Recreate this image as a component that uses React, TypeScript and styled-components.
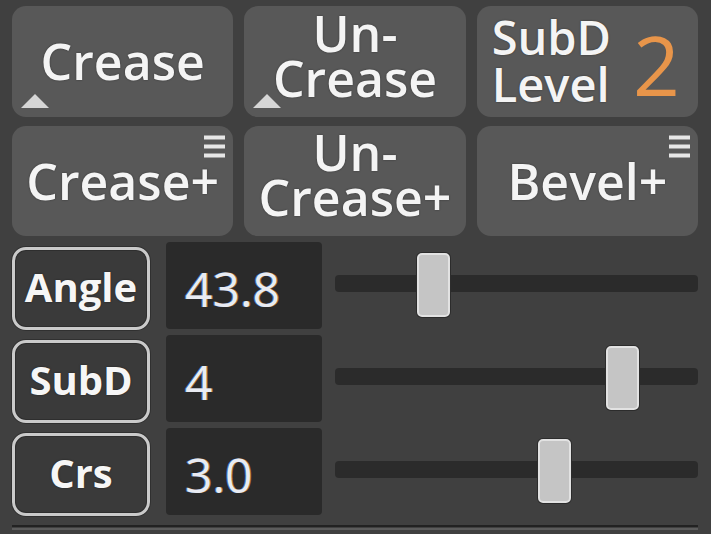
import React from "react";
import styled, { createGlobalStyle } from "styled-components";

const GlobalStyle = createGlobalStyle`
  html, body {
    margin: 0;
    padding: 0;
    background: #404040;
    font-family: "Open Sans", "Noto Sans", "DejaVu Sans", sans-serif;
  }
  * { box-sizing: border-box; }
`;

const Panel = styled.div`
  width: 711px;
  height: 534px;
  padding: 6px 13px 0 12px;
  display: flex;
  flex-direction: column;
  background: #404040;
  overflow: hidden;
`;

const ButtonGrid = styled.div`
  display: grid;
  grid-template-columns: repeat(3, 1fr);
  grid-template-rows: 111px 110px;
  gap: 9px 11px;
`;

const ToolButton = styled.div<{ $stacked?: boolean }>`
  position: relative;
  background: #585858;
  border-radius: 14px;
  display: flex;
  align-items: center;
  justify-content: center;
  text-align: center;
  color: #f4f4f4;
  font-size: 50px;
  line-height: 45px;
  font-weight: 600;
  padding-bottom: ${(p) => (p.$stacked ? "12px" : "0")};
  text-shadow: 0 0 2px rgba(0, 0, 0, 0.45);
  white-space: nowrap;
`;

const LevelButton = styled(ToolButton)`
  justify-content: flex-start;
  padding-left: 15px;
  gap: 22px;
`;

const LevelText = styled.div`
  text-align: left;
  font-size: 47px;
  line-height: 47px;
  padding-bottom: 2px;
`;

const LevelNumber = styled.span`
  color: #e8954a;
  font-size: 82px;
  line-height: 82px;
  font-weight: 400;
  text-shadow: none;
  padding-top: 4px;
`;

const CornerTriangle = styled.span`
  position: absolute;
  left: 9px;
  bottom: 9px;
  width: 0;
  height: 0;
  border-left: 14px solid transparent;
  border-right: 14px solid transparent;
  border-bottom: 14px solid #d6d6d6;
`;

const MenuMark = styled.svg`
  position: absolute;
  top: 9px;
  right: 8px;
`;

const SliderList = styled.div`
  margin-top: 6px;
  display: flex;
  flex-direction: column;
  gap: 6px;
`;

const SliderRow = styled.div`
  display: flex;
  align-items: flex-start;
  height: 87px;
`;

const FieldLabel = styled.div`
  width: 138px;
  height: 83px;
  margin-top: 5px;
  border: 3px solid #cacaca;
  border-radius: 14px;
  background: #3a3a3a;
  box-shadow: 0 0 0 1px #303030, inset 0 0 0 1px #2e2e2e;
  display: flex;
  align-items: center;
  justify-content: center;
  color: #f6f6f6;
  font-size: 40px;
  font-weight: 700;
  padding-bottom: 4px;
  text-shadow: 0 0 2px rgba(0, 0, 0, 0.5);
`;

const ValueBox = styled.div`
  width: 156px;
  height: 87px;
  margin-left: 16px;
  background: #2a2a2a;
  border-radius: 4px;
  display: flex;
  align-items: center;
  padding: 5px 0 0 19px;
  color: #e9ebf2;
  font-size: 48px;
  font-weight: 400;
  text-shadow: -1px 0 rgba(90, 160, 255, 0.65), 1px 0 rgba(255, 170, 70, 0.6);
`;

const TrackArea = styled.div`
  flex: 1;
  height: 100%;
  margin-left: 13px;
  display: flex;
  align-items: center;
`;

const Track = styled.div`
  position: relative;
  width: 100%;
  height: 17px;
  margin-top: -4px;
  background: #2b2b2b;
  border-radius: 4px;
`;

const ThumbRail = styled.div`
  position: absolute;
  left: 0;
  right: 24px;
  top: 0;
  bottom: 0;
`;

const Thumb = styled.div`
  position: absolute;
  top: 50%;
  width: 33px;
  height: 64px;
  margin-top: -31px;
  background: #c5c5c5;
  border: 2px solid #e2e2e2;
  border-radius: 5px;
  box-shadow: 0 0 0 1px #2c2c2c;
`;

const Separator = styled.div`
  margin-top: 10px;
  height: 5px;
  border-top: 2px solid #222222;
  border-bottom: 2px solid #5c5c5c;
`;

const Menu = () => (
  <MenuMark width="21" height="23" viewBox="0 0 21 23">
    <rect x="0" y="0.5" width="21" height="4" fill="#e6e6e6" />
    <rect x="0" y="9.5" width="21" height="4" fill="#e6e6e6" />
    <rect x="0" y="18.5" width="21" height="4" fill="#e6e6e6" />
  </MenuMark>
);

type SliderSpec = { label: string; value: string; num: number; max: number };

const sliders: SliderSpec[] = [
  { label: "Angle", value: "43.8", num: 43.8, max: 180 },
  { label: "SubD", value: "4", num: 4, max: 5 },
  { label: "Crs", value: "3.0", num: 3, max: 5 },
];

export default function App() {
  return (
    <>
      <GlobalStyle />
      <Panel>
        <ButtonGrid>
          <ToolButton>
            Crease
            <CornerTriangle />
          </ToolButton>
          <ToolButton $stacked>
            Un-
            <br />
            Crease
            <CornerTriangle />
          </ToolButton>
          <LevelButton>
            <LevelText>
              SubD
              <br />
              Level
            </LevelText>
            <LevelNumber>2</LevelNumber>
          </LevelButton>
          <ToolButton>
            Crease+
            <Menu />
          </ToolButton>
          <ToolButton $stacked>
            Un-
            <br />
            Crease+
          </ToolButton>
          <ToolButton>
            Bevel+
            <Menu />
          </ToolButton>
        </ButtonGrid>
        <SliderList>
          {sliders.map((s) => (
            <SliderRow key={s.label}>
              <FieldLabel>{s.label}</FieldLabel>
              <ValueBox>{s.value}</ValueBox>
              <TrackArea>
                <Track>
                  <ThumbRail>
                    <Thumb style={{ left: `${(s.num / s.max) * 100}%` }} />
                  </ThumbRail>
                </Track>
              </TrackArea>
            </SliderRow>
          ))}
        </SliderList>
        <Separator />
      </Panel>
    </>
  );
}
